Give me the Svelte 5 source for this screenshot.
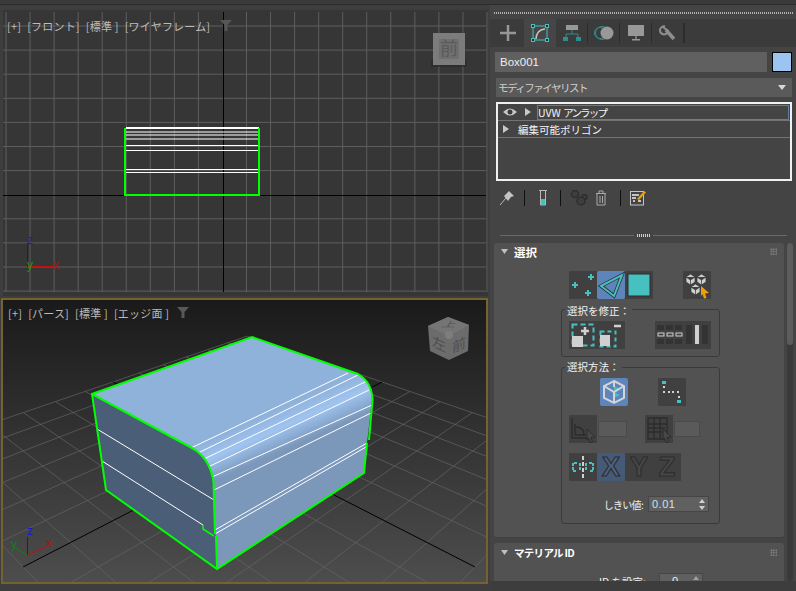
<script>
  // grid of the perspective view, projected from the floor plane
  const project = (x, y) => {
    const w = 0.2535 * x + 0.2541 * y + 1;
    return [(230.8 * x - 106.3 * y + 248) / w, (27.8 * x + 28 * y + 451) / w];
  };
  const steps = 6;
  let perspGrid = [];
  for (let i = -steps; i <= steps; i++) {
    if (i === 0) continue;
    const t = i / steps;
    perspGrid.push([project(t, -1), project(t, 1)]);
    perspGrid.push([project(-1, t), project(1, t)]);
  }

  let frontX = [];
  for (let i = 0; i < 21; i++) if (i !== 9) frontX.push(6 + i * 24.05);
  let frontY = [];
  for (let i = 0; i < 12; i++) if (i !== 7) frontY.push(26 + i * 24.1);
  const wireY = [132, 135, 139, 145.5, 150.5, 169.5, 172.5];

  // seams on the rounded part of the box
  const seams = [
    [191, 448, 348, 373], [198, 453, 358, 375], [204, 459, 365, 382], [208, 467, 369, 390],
    [212, 477, 372, 405], [214, 490, 371, 413], [215, 530, 367, 443], [215, 534, 366, 447],
    [97, 429, 214, 500], [102, 461, 203, 525]
  ];
</script>

<div class="app">
  <div class="strip"></div>
  <div class="main">
    <div class="views">
      <section class="vp front">
        <svg width="485" height="286" viewBox="3 10 485 286">
          <rect x="3" y="10" width="485" height="286" fill="#363636" />
          {#each frontX as x}
            <line x1={x} y1="12" x2={x} y2="292" stroke="#5e5e5e" />
          {/each}
          {#each frontY as y}
            <line x1="3" y1={y} x2="486" y2={y} stroke="#5e5e5e" />
          {/each}
          <line x1="3" y1="195.5" x2="486" y2="195.5" stroke="#000" />
          <line x1="223.5" y1="12" x2="223.5" y2="292" stroke="#000" />
          <rect x="126" y="127" width="133" height="2" fill="#fff" />
          {#each wireY as y}
            <line x1="126" y1={y} x2="258" y2={y} stroke="#fff" />
          {/each}
          <path d="M125 128V195H259V128" fill="none" stroke="#0f0" stroke-width="2" />
          <line x1="27.5" y1="243" x2="27.5" y2="267" stroke="#1010c8" />
          <line x1="28" y1="266.5" x2="54" y2="266.5" stroke="#c01010" />
          <text x="30" y="244" class="axis" fill="#1a1ac8">z</text>
          <text x="30" y="269" class="axis" fill="#10a010">y</text>
          <text x="56" y="269" class="axis" fill="#a01818">x</text>
          <rect x="431" y="60" width="36" height="7" fill="#2b2b2b" opacity="0.7" />
          <rect x="433" y="33" width="32" height="32" fill="#7c7c7c" />
          <rect x="439" y="39" width="20" height="20" fill="#6f6f6f" />
          <text x="449" y="55" class="cube front-cube">前</text>
        </svg>
        <div class="vp-label">
          <span>[+]</span><span>[フロント]</span><span>[標準 ]</span><span>[ワイヤフレーム]</span>
          <svg class="filter" width="12" height="11" viewBox="0 0 12 11"><path d="M0 0H12L7.5 5V11H4.5V5Z" fill="#565656" /></svg>
        </div>
      </section>

      <section class="vp persp">
        <svg width="483" height="282" viewBox="3 300 483 282">
          <defs>
            <linearGradient id="floor" x1="0" y1="0" x2="0" y2="1">
              <stop offset="0" stop-color="#1a1a1a" />
              <stop offset="1" stop-color="#4d4d4d" />
            </linearGradient>
            <linearGradient id="skin" gradientUnits="userSpaceOnUse" x1="275" y1="411" x2="291" y2="447">
              <stop offset="0" stop-color="#8fb2da" />
              <stop offset="0.45" stop-color="#9fc4f0" />
              <stop offset="1" stop-color="#7b98bb" />
            </linearGradient>
          </defs>
          <rect x="3" y="300" width="483" height="282" fill="url(#floor)" />
          {#each perspGrid as l}
            <line x1={l[0][0]} y1={l[0][1]} x2={l[1][0]} y2={l[1][1]} stroke="#666" stroke-width="0.9" opacity="0.75" />
          {/each}
          <line x1="23" y1="567" x2="382" y2="382" stroke="#000" />
          <line x1="475" y1="567" x2="113" y2="382" stroke="#000" />

          <path d="M92 394L252 337L358 374Q372 382 372 400L367 443L364 473L217 569L213 482Q210 458 192 448Z" fill="url(#skin)" />
          <path d="M92 394L192 448Q210 458 213 482L217 569L106 490Z" fill="#4a5e78" />
          {#each seams as s}
            <line x1={s[0]} y1={s[1]} x2={s[2]} y2={s[3]} stroke="#fff" stroke-width="1" />
          {/each}
          <path d="M369 440L372.500 400Q372 382 358 374L252 337L92 394L106 490L217 569L364 473L367 443" fill="none" stroke="#0f0" stroke-width="2" />
          <path d="M92 394L192 448Q210 458 213.500 482L215 534M216 536L217 569" fill="none" stroke="#0f0" stroke-width="2" />
          <path d="M203 525V529L214 536" fill="none" stroke="#0f0" stroke-width="1.500" />
          <path d="M366 443L367 443" fill="none" stroke="#0f0" stroke-width="2" />

          <line x1="27.5" y1="537" x2="27.5" y2="555" stroke="#1010c8" />
          <line x1="28" y1="555" x2="47" y2="546" stroke="#c01010" />
          <line x1="27" y1="555" x2="15" y2="548" stroke="#108010" />
          <text x="30" y="535" class="axis" fill="#1a1ac8">z</text>
          <text x="14" y="548" class="axis" fill="#10801a">y</text>
          <text x="49" y="547" class="axis" fill="#a01818">x</text>

          <path d="M428 326L448 317L469 325L468 351L449 360L430 351Z" fill="#6c6c6c" />
          <path d="M428 326L448 317L469 325L449 336Z" fill="#757575" />
          <circle cx="449" cy="335" r="4" fill="#7e7e7e" />
          <text class="cube small" transform="translate(448 327) skewX(-30) scale(1 .55)">上</text>
          <text class="cube small" transform="translate(439 349) skewY(25)">左</text>
          <text class="cube small" transform="translate(459 350) skewY(-25)">前</text>
        </svg>
        <div class="vp-label">
          <span>[+]</span><span>[パース]</span><span>[標準 ]</span><span>[エッジ面 ]</span>
          <svg class="filter" width="12" height="11" viewBox="0 0 12 11"><path d="M0 0H12L7.5 5V11H4.5V5Z" fill="#585858" /></svg>
        </div>
      </section>
    </div>

    <aside class="panel">
      <div class="dots"></div>
      <div class="tabs">
        <div class="tab">
          <svg width="18" height="18" viewBox="0 0 18 18"><path d="M9 1V17M1 9H17" stroke="#979797" stroke-width="2.500" /></svg>
        </div>
        <div class="tab active">
          <svg width="18" height="18" viewBox="0 0 18 18" fill="none">
            <rect x="2" y="2" width="14" height="14" stroke="#46c1c0" />
            <path d="M5 15C5 9 9 5 14 5" stroke="#c8c8c8" stroke-width="1.500" />
            <g fill="#2c2c2c" stroke="#46c1c0"><rect x=".5" y=".5" width="3" height="3" /><rect x="14.500" y=".5" width="3" height="3" /><rect x=".5" y="14.500" width="3" height="3" /><rect x="14.500" y="14.500" width="3" height="3" /></g>
          </svg>
        </div>
        <div class="tab sep">
          <svg width="18" height="18" viewBox="0 0 18 18">
            <rect x="3" y="1" width="12" height="5" fill="#989898" />
            <path d="M9 6V10M3 14V10H15V14" stroke="#2f8f8f" fill="none" />
            <rect x="0" y="13" width="5" height="4" fill="#2f8f8f" /><rect x="13" y="13" width="5" height="4" fill="#2f8f8f" />
          </svg>
        </div>
        <div class="tab sep">
          <svg width="20" height="18" viewBox="0 0 20 18">
            <circle cx="6" cy="9" r="5.500" fill="none" stroke="#2f8f8f" />
            <circle cx="8" cy="9" r="6.500" fill="none" stroke="#2f8f8f" />
            <circle cx="13" cy="9" r="6.500" fill="#989898" />
          </svg>
        </div>
        <div class="tab sep">
          <svg width="18" height="18" viewBox="0 0 18 18"><rect x="1" y="1" width="16" height="11" fill="#989898" /><rect x="8" y="12" width="2" height="3" fill="#777" /><rect x="5" y="15" width="8" height="1.500" fill="#989898" /></svg>
        </div>
        <div class="tab sep">
          <svg width="18" height="18" viewBox="0 0 18 18" fill="none">
            <path d="M6 2.500A4 4 0 1 0 9 7L4 3" stroke="#8e8e8e" stroke-width="2" />
            <path d="M7 6L15 15" stroke="#8e8e8e" stroke-width="3.500" />
            <circle cx="15.500" cy="15.500" r="1" fill="#444" />
          </svg>
        </div>
        <div class="tab sep last"></div>
      </div>

      <div class="name-row">
        <div class="name">Box001</div>
        <div class="swatch"></div>
      </div>
      <div class="combo">
        <span>モディファイヤリスト</span>
        <svg width="8" height="5" viewBox="0 0 8 5"><path d="M0 0H8L4 5Z" fill="#d8d8d8" /></svg>
      </div>

      <div class="stack">
        <div class="stack-row">
          <svg class="eye" width="14" height="8" viewBox="0 0 14 8"><path d="M0 4Q7-3 14 4Q7 11 0 4Z" fill="#c8c8c8" /><circle cx="7" cy="4" r="2.500" fill="#3c3c3c" /></svg>
          <svg class="tri" width="6" height="8" viewBox="0 0 6 8"><path d="M0 0L6 4L0 8Z" fill="#c8c8c8" /></svg>
          <div class="stack-current">UVW <span>アンラップ</span></div>
        </div>
        <div class="stack-row second">
          <svg class="tri" width="6" height="8" viewBox="0 0 6 8"><path d="M0 0L6 4L0 8Z" fill="#c8c8c8" /></svg>
          <span>編集可能ポリゴン</span>
        </div>
      </div>

      <div class="tools">
        <svg width="16" height="16" viewBox="0 0 16 16"><path d="M1 15L7 8" stroke="#bbb" /><path d="M5 6L10 1L15 6L12 7L9 11Z" fill="#c4c4c4" /></svg>
        <i class="bar"></i>
        <svg width="10" height="16" viewBox="0 0 10 16"><path d="M2.500 1V15H7.500V1" fill="none" stroke="#b8b8b8" /><path d="M1 .5H9" stroke="#b8b8b8" /><rect x="3" y="9" width="4" height="6" fill="#46c1c0" /></svg>
        <i class="bar"></i>
        <svg width="18" height="16" viewBox="0 0 18 16" fill="#3e3e3e" stroke="#2e2e2e" stroke-width="1.500"><circle cx="5" cy="4" r="3.500" /><circle cx="14.500" cy="7" r="2.500" /><circle cx="11" cy="11" r="4" /></svg>
        <svg width="12" height="16" viewBox="0 0 12 16" fill="none" stroke="#aaa"><path d="M1 3.500H11M4 3V1H8V3M2 4V15H10V4M5 6V13M7.500 6V13" /></svg>
        <i class="bar"></i>
        <svg width="16" height="16" viewBox="0 0 16 16"><rect x=".5" y="1.500" width="13" height="13.500" fill="#444" stroke="#c4c4c4" /><path d="M2 5H9M2 8H6M3 11H5M8 11H11" stroke="#c4c4c4" stroke-width="2" /><path d="M7 9L14 1L16 2.500L9 10Z" fill="#f0a000" /></svg>
      </div>

      <div class="splitter"><span></span><b></b><span></span></div>

      <div class="scroller">
        <div class="rollouts">
          <div class="rollout">
            <div class="roll-title">
              <svg width="7" height="5" viewBox="0 0 7 5"><path d="M0 0H7L3.500 5Z" fill="#c0c0c0" /></svg>
              <strong>選択</strong>
              <i class="grip"></i>
            </div>

            <div class="row first-row">
              <div class="cell">
                <svg width="28" height="28" viewBox="0 0 28 28" fill="none" stroke="#46c1c0" stroke-width="2"><path d="M6 11V17M3 14H9M22 3V9M19 6H25M19 19V25M16 22H22" /></svg>
              </div>
              <div class="cell on">
                <svg width="28" height="28" viewBox="0 0 28 28" fill="none"><path d="M4 15L25 4L17 25Z" stroke="#2c2c2c" stroke-width="3.500" /><path d="M4 15L25 4L17 25Z" stroke="#46c1c0" stroke-width="2" /></svg>
              </div>
              <div class="cell">
                <svg width="28" height="28" viewBox="0 0 28 28"><rect x="3" y="3" width="22" height="22" fill="#46c1c0" stroke="#2c2c2c" /></svg>
              </div>
              <div class="cell push">
                <svg width="28" height="28" viewBox="0 0 28 28">
                  <g fill="#cfcfcf" stroke="#333" stroke-width=".7">
                    <path d="M3 6L7.500 3L12 6V11L7.500 14L3 11ZM3 6L7.500 9L12 6M7.500 9V14" /><path d="M14 6L18.500 3L23 6V11L18.500 14L14 11ZM14 6L18.500 9L23 6M18.500 9V14" /><path d="M8 16L12.500 13L17 16V21L12.500 24L8 21ZM8 16L12.500 19L17 16M12.500 19V24" />
                  </g>
                  <path d="M18 15L26 22L22 22.500L23.500 27L21 27.500L19.500 23L18 25Z" fill="#f0a000" />
                </svg>
              </div>
            </div>

            <div class="group g1">
              <div class="legend">選択を修正：</div>
              <div class="row">
                <div class="cell">
                  <svg width="28" height="28" viewBox="0 0 28 28" fill="none">
                    <rect x="3.500" y="3.500" width="21" height="21" stroke="#46c1c0" stroke-width="2" stroke-dasharray="5 3" />
                    <rect x="3" y="15" width="11" height="11" fill="#d0d0d0" />
                    <path d="M16 6V14M12 10H20" stroke="#d0d0d0" stroke-width="2.500" />
                  </svg>
                </div>
                <div class="cell">
                  <svg width="28" height="28" viewBox="0 0 28 28" fill="none">
                    <rect x="3.500" y="10.500" width="15" height="15" stroke="#46c1c0" stroke-width="2" stroke-dasharray="4 3" />
                    <rect x="3" y="14" width="10" height="11" fill="#d0d0d0" />
                    <path d="M17 5H24" stroke="#d0d0d0" stroke-width="2.500" />
                  </svg>
                </div>
                <div class="cell double push30">
                  <svg width="56" height="28" viewBox="0 0 56 28">
                    <g fill="#333"><rect x="2" y="4" width="7" height="5" /><rect x="11" y="4" width="7" height="5" /><rect x="20" y="4" width="7" height="5" /><rect x="2" y="18" width="7" height="5" /><rect x="11" y="18" width="7" height="5" /><rect x="20" y="18" width="7" height="5" /><rect x="31" y="4" width="6" height="19" /><rect x="47" y="4" width="6" height="19" /></g>
                    <g fill="none" stroke="#d0d0d0"><rect x="3" y="12" width="6" height="3" /><rect x="12" y="12" width="6" height="3" /><rect x="21" y="12" width="6" height="3" /></g>
                    <rect x="40" y="4" width="4" height="19" fill="#d0d0d0" />
                  </svg>
                </div>
              </div>
            </div>

            <div class="group g2">
              <div class="legend">選択方法：</div>
              <div class="row method">
                <div class="cell on">
                  <svg width="28" height="28" viewBox="0 0 28 28" fill="none">
                    <path d="M14 8L20 11L14 14ZM14 14L20 17L14 20Z" fill="#46c1c0" />
                    <path d="M14 3L24 8V20L14 25L4 20V8ZM4 8L14 14L24 8M14 14V25M14 3V9" stroke="#d4d4d4" stroke-width="2" />
                  </svg>
                </div>
                <div class="cell push30">
                  <svg width="28" height="28" viewBox="0 0 28 28">
                    <rect x="4" y="3" width="4" height="3" fill="#46c1c0" />
                    <g fill="#d0d0d0"><rect x="5" y="8" width="2" height="2" /><rect x="5" y="13" width="2" height="2" /><rect x="10" y="13" width="2" height="2" /><rect x="14" y="13" width="2" height="2" /><rect x="19" y="13" width="2" height="2" /><rect x="20" y="18" width="2" height="2" /></g>
                    <rect x="19" y="22" width="4" height="3" fill="#46c1c0" />
                  </svg>
                </div>
              </div>
              <div class="row angle">
                <div class="cell">
                  <svg width="28" height="28" viewBox="0 0 28 28" fill="none" stroke="#2c2c2c" stroke-width="1.500">
                    <path d="M3 3V23H18M6 9V20H17M7 12C12 12 15 15 15 20" />
                    <path d="M18 14L26 22L22 22.500L23.500 27L21 27.500L19.500 23L18 25Z" fill="#484848" stroke-width="1" />
                  </svg>
                </div>
                <div class="field"></div>
                <div class="cell gap17">
                  <svg width="28" height="28" viewBox="0 0 28 28" fill="none" stroke="#2c2c2c" stroke-width="1.300">
                    <path d="M3 3H22V24H3ZM3 9H22M3 13H20M3 17H20M9 3V24M15 3V24" />
                    <path d="M18 14L26 22L22 22.500L23.500 27L21 27.500L19.500 23L18 25Z" fill="#484848" stroke-width="1" />
                  </svg>
                </div>
                <div class="field narrow"></div>
              </div>
              <div class="row axes">
                <div class="cell">
                  <svg width="28" height="28" viewBox="0 0 28 28" fill="none">
                    <path d="M14 3V25" stroke="#d0d0d0" stroke-width="2" stroke-dasharray="4 2" />
                    <path d="M8 10H4V18H8M11 10V18M17 10V18M20 10H24V18H20" stroke="#46c1c0" stroke-width="2" stroke-dasharray="3 1" />
                  </svg>
                </div>
                <div class="cell letter sel">X</div>
                <div class="cell letter">Y</div>
                <div class="cell letter">Z</div>
              </div>
              <div class="row thresh">
                <span>しきい値:</span>
                <div class="spin">
                  <span>0.01</span>
                  <svg width="6" height="11" viewBox="0 0 6 11"><path d="M0 4L3 0L6 4ZM0 7H6L3 11Z" fill="#cfcfcf" /></svg>
                </div>
              </div>
            </div>
          </div>

          <div class="rollout second">
            <div class="roll-title">
              <svg width="7" height="5" viewBox="0 0 7 5"><path d="M0 0H7L3.500 5Z" fill="#c0c0c0" /></svg>
              <strong>マテリアル ID</strong>
              <i class="grip"></i>
            </div>
            <div class="id-row">
              <span>ID を設定:</span>
              <div class="spin small">
                <span>0</span>
                <svg width="6" height="11" viewBox="0 0 6 11"><path d="M0 4L3 0L6 4ZM0 7H6L3 11Z" fill="#a0a0a0" /></svg>
              </div>
            </div>
          </div>
        </div>
        <div class="scrollbar"><div class="thumb"></div></div>
      </div>
      <div class="foot"></div>
    </aside>
  </div>
</div>

<style>
  :global(body) {
    margin: 0;
    background: #3d3d3d;
  }
  .app {
    width: 796px;
    height: 591px;
    overflow: hidden;
    background: #3e3e3e;
    font-family: "Noto Sans CJK JP", "Liberation Sans", sans-serif;
    color: #e8e8e8;
  }
  .strip {
    height: 4px;
    background: #3a3a3a;
    border-bottom: 1px solid #2c2c2c;
  }
  .main {
    display: flex;
  }
  .views {
    width: 490px;
    padding-top: 5px;
    flex: none;
  }
  .vp {
    position: relative;
    line-height: 0;
  }
  .front {
    margin-left: 3px;
    margin-bottom: 2px;
    width: 485px;
  }
  .persp {
    margin-left: 1px;
    width: 483px;
    border: 2px solid #75632f;
  }
  .vp-label {
    position: absolute;
    left: 4px;
    top: 10px;
    display: flex;
    align-items: center;
    gap: 6px;
    font-size: 11px;
    line-height: 13px;
    letter-spacing: 0.2px;
    color: #bcbcbc;
    white-space: nowrap;
  }
  .persp .vp-label {
    left: 5px;
    top: 7px;
  }
  .filter {
    margin-left: 4px;
    margin-top: -3px;
  }
  .persp .filter {
    margin-left: 2px;
  }
  .axis {
    font: 12px "Liberation Sans", sans-serif;
    text-anchor: middle;
  }
  .cube {
    font-size: 18px;
    fill: #5a5a5a;
    text-anchor: middle;
  }
  .cube.small {
    font-size: 14px;
    fill: #505050;
  }

  .panel {
    width: 306px;
    flex: none;
    background: #444;
    height: 586px;
    overflow: hidden;
  }
  .dots {
    height: 2px;
    margin: 7px 3px 5px 4px;
    background: repeating-linear-gradient(90deg, #b0b0b0 0 1px, transparent 1px 2px);
  }
  .tabs {
    display: flex;
    height: 28px;
    padding-left: 2px;
    background: #3b3b3b;
  }
  .tab {
    width: 32px;
    display: flex;
    align-items: center;
    justify-content: center;
  }
  .tab.active {
    background: #464646;
  }
  .tab.sep {
    position: relative;
  }
  .tab.sep::after {
    content: "";
    position: absolute;
    right: 0;
    top: 4px;
    bottom: 4px;
    width: 1px;
    background: #2c2c2c;
  }
  .tab.last {
    width: 1px;
  }
  .name-row {
    display: flex;
    gap: 5px;
    margin: 5px 4px 0 5px;
  }
  .name {
    width: 272px;
    height: 20px;
    line-height: 20px;
    padding-left: 5px;
    box-sizing: border-box;
    background: #606060;
    font: 11.500px/20px "Liberation Sans", sans-serif;
    color: #eee;
  }
  .swatch {
    width: 20px;
    height: 20px;
    box-sizing: border-box;
    background: #9cc4f0;
    border: 1px solid #000;
  }
  .combo {
    display: flex;
    align-items: center;
    justify-content: space-between;
    margin: 6px 4px 0 6px;
    height: 19px;
    padding: 0 6px 0 2px;
    background: #5a5a5a;
    font-size: 10.500px;
    letter-spacing: -1.500px;
    color: #cfcfcf;
  }
  .stack {
    margin: 5px 4px 0 6px;
    height: 79px;
    box-sizing: border-box;
    border: 2px solid #f0f0f0;
    background: #444;
    font-size: 10.500px;
  }
  .stack-row {
    display: flex;
    align-items: center;
    height: 17px;
    box-sizing: border-box;
    border-bottom: 1px solid #737373;
  }
  .eye {
    margin-left: 5px;
  }
  .stack-row .tri {
    margin-left: 8px;
  }
  .stack-current {
    flex: 1;
    margin: 0 1px 0 6px;
    height: 15px;
    line-height: 13px;
    box-sizing: border-box;
    border: 1px solid #5d7ea6;
    color: #f4f4f4;
  }
  .stack-current span {
    letter-spacing: -1.800px;
  }
  .second .tri {
    margin-left: 5px;
  }
  .second span {
    margin-left: 9px;
    color: #f4f4f4;
  }
  .tools {
    display: flex;
    align-items: center;
    height: 16px;
    margin: 9px 0 0 9px;
  }
  .tools svg:nth-of-type(1) { margin-right: 9px; }
  .tools svg:nth-of-type(2) { margin: 0 12px 0 13px; }
  .tools svg:nth-of-type(3) { margin: 0 7px 0 9px; }
  .tools svg:nth-of-type(4) { margin-right: 13px; }
  .tools svg:nth-of-type(5) { margin-left: 9px; }
  .bar {
    display: block;
    width: 1px;
    height: 16px;
    background: #111;
  }
  .splitter {
    display: flex;
    align-items: center;
    gap: 3px;
    margin: 28px 9px 0 10px;
    height: 3px;
  }
  .splitter span {
    flex: 1;
    height: 1px;
    background: #696969;
  }
  .splitter b {
    width: 13px;
    height: 3px;
    background: repeating-linear-gradient(90deg, #d0d0d0 0 1px, transparent 1px 2px);
  }
  .scroller {
    display: flex;
    margin: 6px 0 0 4px;
    height: 338px;
    overflow: hidden;
  }
  .foot {
    height: 10px;
    background: #3d3d3d;
  }
  .rollouts {
    width: 290px;
    flex: none;
  }
  .rollout {
    height: 295px;
    box-sizing: border-box;
    background: #525252;
    border-radius: 3px;
    border-bottom: 1px solid #3e3e3e;
    padding-bottom: 14px;
  }
  .rollout.second {
    margin-top: 5px;
    height: 60px;
  }
  .roll-title {
    display: flex;
    align-items: center;
    height: 17px;
    padding: 0 7px 0 7px;
  }
  .roll-title strong {
    margin-left: 6px;
    font-size: 11.500px;
    color: #fff;
  }
  .second .roll-title {
    height: 18px;
  }
  .second .roll-title strong {
    font-size: 10.500px;
    letter-spacing: -0.700px;
  }
  .grip {
    margin-left: auto;
    width: 7px;
    height: 7px;
    background: radial-gradient(circle, #8a8a8a 0 45%, transparent 50%) 0 0 / 2.500px 2.500px;
  }
  .row {
    display: flex;
  }
  .first-row {
    margin: 11px 0 0 75px;
  }
  .cell {
    width: 28px;
    height: 28px;
    flex: none;
    background: #404040;
    line-height: 0;
  }
  .cell.on {
    background: #5d85bb;
    border-radius: 2px;
  }
  .push {
    margin-left: 30px;
  }
  .push30 {
    margin-left: 30px;
  }
  .double {
    width: 56px;
  }
  .group {
    margin: 10px 0 0 67px;
    width: 159px;
    box-sizing: border-box;
    border: 1.500px solid #3a3a3a;
    border-radius: 3px;
  }
  .g1 {
    height: 48px;
    padding: 2px 0 0 7px;
  }
  .g2 {
    height: 157px;
    padding: 0 0 0 7px;
  }
  .legend {
    display: table;
    margin: -9px 0 0 -4px;
    padding: 0 2px;
    height: 16px;
    background: #525252;
    font-size: 10.500px;
    line-height: 16px;
    color: #f0f0f0;
  }
  .g1 .legend {
    margin-bottom: 2px;
  }
  .g2 .legend {
    margin-bottom: 3px;
  }
  .method {
    margin-left: 31px;
  }
  .angle {
    margin-top: 9px;
    align-items: center;
  }
  .field {
    width: 29px;
    height: 16px;
    margin-left: 1px;
    background: #5a5a5a;
    border: 1px solid #4a4a4a;
    box-sizing: border-box;
  }
  .field.narrow {
    width: 26px;
  }
  .gap17 {
    margin-left: 18px;
  }
  .axes {
    margin-top: 10px;
  }
  .letter {
    font: bold 27px/28px "Liberation Sans", sans-serif;
    text-align: center;
    color: #484848;
    -webkit-text-stroke: 1.200px #2e2e2e;
  }
  .letter.sel {
    background: #465a78;
    border-radius: 2px;
    color: #4c6282;
  }
  .thresh {
    margin: 15px 0 0 0;
    align-items: center;
    justify-content: flex-end;
    gap: 5px;
    padding-right: 10px;
    font-size: 10px;
    letter-spacing: -0.700px;
    color: #f0f0f0;
  }
  .spin {
    display: flex;
    align-items: center;
    justify-content: space-between;
    width: 61px;
    height: 16px;
    box-sizing: border-box;
    padding: 0 3px;
    background: #606060;
    border: 1px solid #464646;
    font: 11px "Liberation Sans", sans-serif;
    color: #cfe0f0;
    letter-spacing: 0.5px;
  }
  .id-row {
    display: flex;
    align-items: center;
    justify-content: flex-end;
    gap: 13px;
    padding-right: 81px;
    margin-top: 12px;
    font-size: 10.500px;
    color: #8a8a8a;
  }
  .spin.small {
    width: 44px;
    color: #8e8e8e;
  }
  .scrollbar {
    width: 6px;
    margin-left: 3px;
    background: #3a3a3a;
    border-radius: 3px;
  }
  .thumb {
    height: 102px;
    border-radius: 3px;
    background: #5c5c5c;
  }
</style>
